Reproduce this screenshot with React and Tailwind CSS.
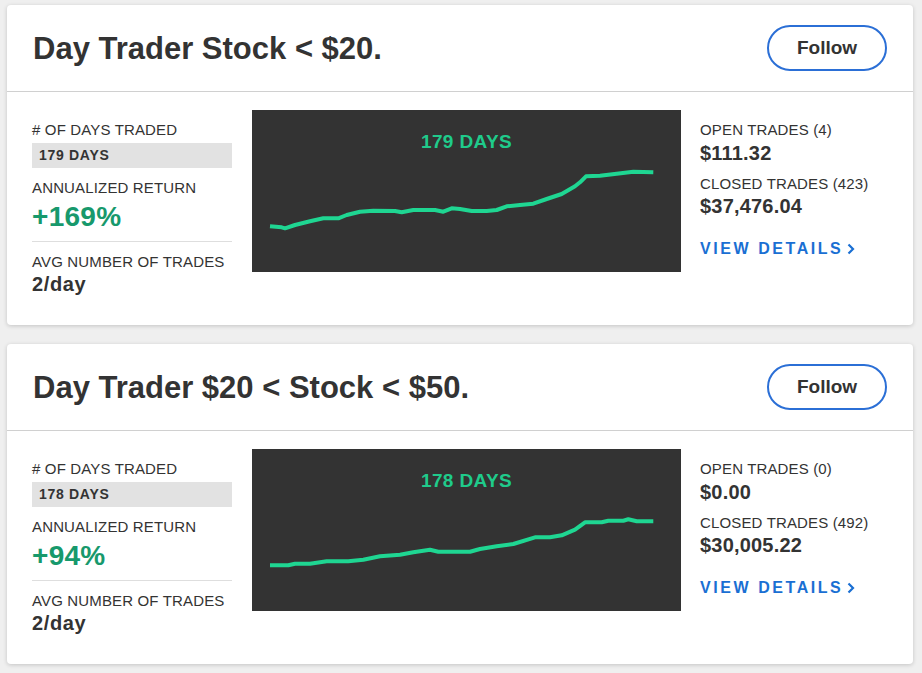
import React from "react";

const cards = [
  {
    title: "Day Trader Stock < $20.",
    days: "179 DAYS",
    ret: "+169%",
    trades: "2/day",
    open: "OPEN TRADES (4)",
    openVal: "$111.32",
    closed: "CLOSED TRADES (423)",
    closedVal: "$37,476.04",
    pts: [
      [18, 116.3], [29.7, 117.3], [33, 118.3], [43, 115], [58, 111.3], [71.3, 108.3], [86.3, 108.3],
      [94.7, 105], [108, 101.7], [121.3, 100.7], [143, 101], [149.7, 102.3], [161.3, 100], [183, 100],
      [191.3, 101.7], [199.7, 98.3], [208, 99], [219.7, 101], [234.7, 101], [244.7, 100], [254.7, 96.3],
      [268, 95], [281.3, 93.7], [294.7, 89], [309.7, 84], [323, 76.3], [328, 72.3], [334, 66.3],
      [348, 65.7], [364.7, 63.7], [381.3, 61.7], [401.3, 62.3],
    ],
  },
  {
    title: "Day Trader $20 < Stock < $50.",
    days: "178 DAYS",
    ret: "+94%",
    trades: "2/day",
    open: "OPEN TRADES (0)",
    openVal: "$0.00",
    closed: "CLOSED TRADES (492)",
    closedVal: "$30,005.22",
    pts: [
      [18, 116.3], [36.3, 116.3], [43, 114.7], [58, 114.7], [74.7, 112.3], [96.3, 112.3], [111.3, 110.7],
      [128, 107.3], [148, 105.7], [161.3, 103.3], [178, 100.7], [186.3, 102.7], [218, 102.7], [228, 100],
      [244.7, 97.3], [261.3, 95], [283, 88.3], [298, 88.3], [309.7, 86.3], [323, 80.7], [333, 73.3],
      [349.7, 73.3], [356.3, 71.7], [371.3, 71.7], [376.3, 70.3], [384.7, 72.3], [401.3, 72.3],
    ],
  },
];

function Card({ c }) {
  const d = c.pts.map((p, i) => (i ? "L" : "M") + p[0] + " " + p[1]).join(" ");
  return (
    <div className="ml-[7px] w-[906px] rounded-[4px] bg-white shadow-[0_1px_4px_rgba(0,0,0,0.18)]">
      <div className="flex h-[87px] items-center justify-between border-b border-[#d0d0d0] pl-[26px] pr-[26px]">
        <h2 className="text-[31px] font-bold leading-none text-[#333]">{c.title}</h2>
        <button className="h-[46px] w-[120px] rounded-full border-2 border-[#2b6fd6] text-[19px] font-bold text-[#333]">
          Follow
        </button>
      </div>
      <div className="flex h-[233px] pl-[25px] pt-[18px]">
        <div className="w-[200px] pt-[12px] text-[#333]">
          <div className="text-[15px] leading-[16px] tracking-[0.01em]">&#35; OF DAYS TRADED</div>
          <div className="mt-[5px] flex h-[25px] items-center bg-[#e2e2e2] pl-[7px] text-[14px] font-bold tracking-[0.05em]">
            {c.days}
          </div>
          <div className="mt-[12px] text-[15px] leading-[16px] tracking-[0.01em]">ANNUALIZED RETURN</div>
          <div className="mt-[6px] text-[28px] font-bold leading-[30px] tracking-[0.01em] text-[#17996c]">{c.ret}</div>
          <div className="mt-[9px] border-t border-[#dedede]" />
          <div className="mt-[12px] text-[15px] leading-[16px] tracking-[0.01em]">AVG NUMBER OF TRADES</div>
          <div className="mt-[3px] text-[20px] font-bold leading-[22px] tracking-[0.03em]">{c.trades}</div>
        </div>
        <div className="ml-[20px] flex h-[162px] w-[429px] flex-col bg-[#333333]">
          <div className="mt-[21px] text-center text-[19px] font-bold leading-[22px] tracking-[0.02em] text-[#1fcb8b]">
            {c.days}
          </div>
          <svg className="-mt-[43px]" width="429" height="140" viewBox="0 0 429 140">
            <path d={d} fill="none" stroke="#1fd692" strokeWidth="4" strokeLinejoin="round" strokeLinecap="butt" />
          </svg>
        </div>
        <div className="ml-[19px] pt-[12px] text-[#333]">
          <div className="text-[15px] leading-[16px] tracking-[0.01em]">{c.open}</div>
          <div className="mt-[4px] text-[20px] font-bold leading-[22px] tracking-[0.01em]">{c.openVal}</div>
          <div className="mt-[12px] text-[15px] leading-[16px] tracking-[0.01em]">{c.closed}</div>
          <div className="mt-[3px] text-[20px] font-bold leading-[22px] tracking-[0.01em]">{c.closedVal}</div>
          <div className="mt-[22px] flex items-center text-[16px] font-bold leading-[20px] tracking-[0.16em] text-[#1a6fd3]">
            VIEW DETAILS
            <svg className="ml-[3px]" width="10" height="14" viewBox="0 0 10 14">
              <path d="M2.5 2.5 L7 7 L2.5 11.5" fill="none" stroke="#1a6fd3" strokeWidth="2.2" />
            </svg>
          </div>
        </div>
      </div>
    </div>
  );
}

export default function App() {
  return (
    <div
      className="min-h-[673px] w-[922px] bg-[#efefef] pt-[5px]"
      style={{ fontFamily: '"Liberation Sans", Arial, sans-serif' }}
    >
      <Card c={cards[0]} />
      <div className="h-[19px]" />
      <Card c={cards[1]} />
    </div>
  );
}
